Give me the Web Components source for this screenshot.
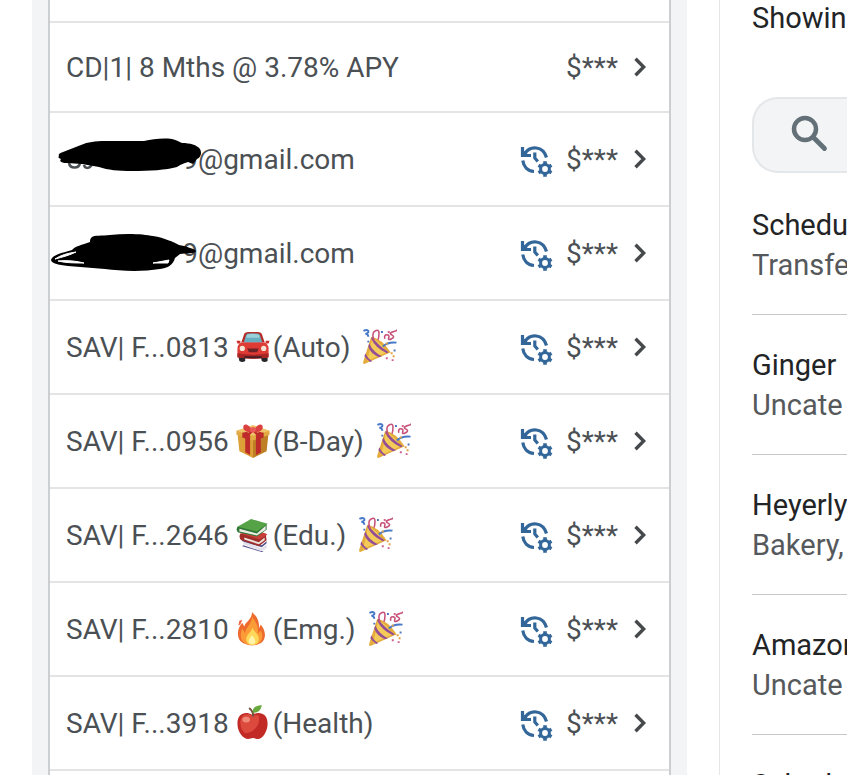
<!DOCTYPE html>
<html lang="en">
<head>
<meta charset="utf-8">
<title>Accounts</title>
<style>
  html, body { margin: 0; height: 100%; background: #fff; overflow: hidden; }
  body { font-family: Roboto, "Liberation Sans", sans-serif; font-size: 28px; color: #4b5054; }
</style>
</head>
<body>
<bank-page>
  <account-list slot="accounts">
    <account-row>CD|1| 8 Mths @ 3.78% APY</account-row>
    <account-row scheduled><redacted-name shape="oval">9</redacted-name>@gmail.com</account-row>
    <account-row scheduled><redacted-name shape="loop">9</redacted-name>@gmail.com</account-row>
    <account-row scheduled>SAV| F...0813<emoji-glyph name="car"></emoji-glyph>(Auto) <emoji-glyph name="party"></emoji-glyph></account-row>
    <account-row scheduled>SAV| F...0956<emoji-glyph name="gift"></emoji-glyph>(B-Day) <emoji-glyph name="party"></emoji-glyph></account-row>
    <account-row scheduled>SAV| F...2646<emoji-glyph name="books"></emoji-glyph>(Edu.) <emoji-glyph name="party"></emoji-glyph></account-row>
    <account-row scheduled>SAV| F...2810<emoji-glyph name="fire"></emoji-glyph>(Emg.) <emoji-glyph name="party"></emoji-glyph></account-row>
    <account-row scheduled>SAV| F...3918<emoji-glyph name="apple"></emoji-glyph>(Health)</account-row>
  </account-list>
  <activity-panel slot="activity">
    <span slot="summary">Showin</span>
    <activity-item>Schedu<span slot="category">Transfe</span></activity-item>
    <activity-item>Ginger<span slot="category">Uncate</span></activity-item>
    <activity-item>Heyerly<span slot="category">Bakery,</span></activity-item>
    <activity-item>Amazon<span slot="category">Uncate</span></activity-item>
    <activity-item>Schedu</activity-item>
  </activity-panel>
</bank-page>

<script>
const define = (name, html, setup) => {
  const template = document.createElement('template');
  template.innerHTML = html;
  customElements.define(name, class extends HTMLElement {
    constructor() {
      super();
      this.attachShadow({ mode: 'open' }).append(template.content.cloneNode(true));
    }
    connectedCallback() { if (setup) setup(this, this.shadowRoot); }
  });
};

define('bank-page', `
<style>
  :host { display: grid; grid-template-columns: minmax(0, 719fr) minmax(0, 128fr); height: 100vh; overflow: hidden; }
  .accounts { display: flex; padding: 0 32px; }
  .activity { border-left: 1px solid #e4e6e8; padding-left: 32px; overflow: hidden; }
</style>
<section class="accounts"><slot name="accounts"></slot></section>
<section class="activity"><slot name="activity"></slot></section>`);

define('account-list', `
<style>
  :host { flex: 1; min-width: 0; display: flex; background: #f2f4f6; padding: 0 16px; }
  .sheet { flex: 1; min-width: 0; background: #fff; border: solid #cccfd1; border-width: 0 2px; }
  .previous { height: 21px; border-bottom: 2px solid #e2e4e5; }
</style>
<div class="sheet"><div class="previous"></div><slot></slot></div>`);

define('account-row', `
<style>
  :host { display: block; border-bottom: 2px solid #e2e4e5; --row: 88px; }
  :host([scheduled]) { --row: 92px; }
  a { display: flex; align-items: center; height: var(--row); padding: 0 23px 0 16px; color: inherit; text-decoration: none; }
  .name { flex: 1; min-width: 0; white-space: nowrap; line-height: 40px; padding-top: 2px; }
  .icon { width: 34px; height: 34px; margin-right: 12px; padding-top: 4px; flex: none; display: none; }
  :host([scheduled]) .icon { display: block; }
  .amount { line-height: 40px; margin-right: 16px; padding-top: 2px; }
  .chevron { width: 12px; height: 20px; flex: none; }
</style>
<a href="#account">
  <span class="name"><slot></slot></span>
  <svg class="icon" viewBox="0 0 34 34" fill="none" stroke="#336699" stroke-width="3.200" aria-hidden="true">
    <path d="M5 9.500C10 1.500 23 1.500 26.500 13.500"/>
    <path d="M2.500 3v8.500H11"/>
    <path d="M2.500 5v6.500H9z" fill="#336699" stroke="none"/>
    <path d="M2.800 16.500C3.500 22.500 7.500 27 14 27.500"/>
    <path d="M14.800 8.500v5.500l3 3.500"/>
    <circle cx="25" cy="25" r="4.400" stroke-width="3"/>
    <path d="M25 17.300v3M25 29.700v3M18.500 21.200l2.600 1.500M28.900 27.300l2.600 1.500M18.500 28.800l2.600-1.500M28.900 22.700l2.600-1.500" stroke-width="3.600"/>
  </svg>
  <span class="amount">$***</span>
  <svg class="chevron" viewBox="0 0 12 20" fill="none" stroke="#46494c" stroke-width="3.400" aria-hidden="true"><path d="M1.500 1.800l8.200 8.200-8.200 8.200"/></svg>
</a>`);

define('redacted-name', `
<style>
  :host { display: inline-flex; position: relative; width: 132px; justify-content: flex-end; line-height: 40px; }
  svg { position: absolute; left: -16px; top: 1px; width: 152px; height: 40px; overflow: visible; display: none; }
  :host([shape=oval]) .oval, :host([shape=loop]) .loop { display: block; }
</style>
<slot></slot>
<svg class="oval" viewBox="0 0 152 40" aria-hidden="true">
  <path d="M19 22c1 6 10 6 11 0M34 24c1 4 6 4 8-1" fill="none" stroke="#4b5054" stroke-width="2.500"/>
  <path d="M9 15C8 13 10 12 13 11L31 4C38 1 45 0 55 0L94 0C103-2 112-3 122-2C127-1 129 1 132 2C140 2 147 4 150 8C152 12 151 16 147 18L143 23L138 21C132 23 130 24 127 26C116 29 100 30 82 30C68 30 58 29 49 26L32 23L17 22C11 22 9 20 11 18C8 17 8 16 9 15z"/>
</svg>
<svg class="loop" viewBox="0 0 152 40" aria-hidden="true">
  <path d="M42 2C44 0 52 1 60 0C76-2 94-1 103 1C115 3 123 7 129 10C135 11 145 14 146 16C146 19 136 18 130 19L125 23C123 30 118 33 110 34C92 37 70 36 55 34L18 31C8 30 1 28 1 25C2 20 12 18 22 15C25 11 32 10 40 7C40 5 40 4 42 2z"/>
  <path d="M5 24C11 20 18 18 26 17C20 20 13 22 5 24zM8 26C18 25 26 26 34 28C25 28 16 28 8 26zM103 28L119 25L118 28z" fill="#fff" stroke="#fff"/>
</svg>`);

const EMOJI = {
  car: ['automobile', `
    <path d="M3 28h7v5q-3 2-6 0zM26 28h7v5q-3 2-6 0z" fill="#27272b"/>
    <path d="M6 14L9 5Q10 3 13 3h10q3 0 4 2l3 9z" fill="#b52c28"/>
    <path d="M8.500 14L11 6q1-1.500 3-1.500h8q2 0 3 1.500l2.500 8z" fill="#69adc0"/><path d="M11 9l1-3q6-2 12 0l1 3z" fill="#9ad0da"/>
    <path d="M1 12h4v3H2zM31 12h4l-1 3h-3z" fill="#cc302c"/>
    <path d="M6 14h24q4 2 4 6v9q-16 3-32 0v-9q0-4 4-6z" fill="#de3b35"/>
    <path d="M2 25q16 3 32 0v4q-16 3-32 0z" fill="#a72523"/>
    <path d="M12 20h12l-2 4h-8z" fill="#6b2327"/><path d="M9 28h18v2H9z" fill="#442026"/>
    <circle cx="7" cy="20" r="2.700" fill="#f6e5d6"/><circle cx="29" cy="20" r="2.700" fill="#f6e5d6"/>`],
  gift: ['wrapped gift', `
    <path d="M2 10l16 6v20L4 29z" fill="#dda038"/><path d="M34 10l-16 6v20l14-7z" fill="#bf7f25"/>
    <path d="M1 8L18 3l17 5v4l-17 6L1 12z" fill="#e2aa42"/><path d="M1 8l17 5 17-5-17-6z" fill="#efc56c"/>
    <path d="M7 10l5-1 3 4v20l-5-3V16l-3-1zM29 10l-5-1-3 4v20l5-3V16l3-1z" fill="#bd2b2a"/>
    <path d="M18 9C14 0 8 0 8 4s4 6 10 5zm0 0c4-9 10-9 10-5s-4 6-10 5z" fill="#db4141"/><path d="M17 8l-8 4 5 1 4-4 4 4 5-1-8-4z" fill="#bd2b2a"/>
    <circle cx="18" cy="7" r="3" fill="#e95b57"/>`],
  books: ['books', `
    <path d="M8 25l19 7 5-4v4l-5 3-19-7z" fill="#e4e1eb"/><path d="M7 23l20 6 5-4v2l-5 4-20-6zM8 29l18 6h3l-2 1L7 30z" fill="#54518d"/>
    <path d="M5 17q-2 4 1 7l18 6 8-6-1-7z" fill="#a12d2a"/><path d="M9 21l15 5 6-5v3l-6 4-15-5z" fill="#eee5df"/><path d="M5 17l20 6 8-5-10-4z" fill="#c93f38"/>
    <path d="M2 10q-2 4 1 6l19 4 10-7V7z" fill="#307535"/><path d="M4 12l18 5 9-8v4l-9 6-18-4z" fill="#e9ede4"/><path d="M2 10L16 2l17 5-11 8z" fill="#55a247"/>`],
  fire: ['fire', `
    <path d="M17 1c0 8-7 10-8 15L7 12c-5 5-5 12-4 15 2 10 25 12 27 0 1-5-1-9-4-13l-2 4C25 9 21 5 17 1z" fill="#ee6b2f"/>
    <path d="M17 6c0 8-7 11-7 17l-3-5c-5 12 3 17 10 17 9 0 13-7 9-15l-3 3C24 14 20 11 17 6z" fill="#fb9c37"/>
    <path d="M17 17c0 5-6 7-6 12 0 8 13 8 13 0 0-5-4-7-7-12z" fill="#ffd85a"/><path d="M17 25c-6 7-3 9 0 9s6-2 0-9z" fill="#fff4a9"/>
    <path d="M4 10l3-1-2 5-2 1z" fill="#ec6440"/>`],
  apple: ['red apple', `
    <path d="M17 10C10 6 2 9 2 19c0 9 6 16 11 16 2 0 3-1 5-1s3 1 5 1c5 0 10-8 10-16 0-10-8-13-16-9z" fill="#c22a26"/>
    <path d="M17 11C11 7 5 11 5 18c0 5 2 9 5 11 9 0 16-9 14-18-3-1-5 0-7 0z" fill="#dc4a3e"/><ellipse cx="11" cy="15" rx="4" ry="3" fill="#f08a78"/>
    <path d="M18 12q1-5-4-9" fill="none" stroke="#72533b" stroke-width="2"/><path d="M18 8C17 2 21 1 27 0c-1 6-4 8-9 8z" fill="#68a83c"/>`],
  party: ['party popper', `
    <path d="M10 8Q21 10 30 24L3 36q-2 0-1-3z" fill="#e5ac3c"/><path d="M11 9q9 5 15 15L6 33z" fill="#f4ca58"/>
    <path d="M8 15q4 9 13 13l-3 1Q9 25 7 18zM4 25q2 5 7 8l-2 1q-4-3-6-6zM11 8q5 8 17 16l-2 1Q14 19 10 10z" fill="#934e96"/>
    <path d="M2 2q4-2 5 0t-3 3q3 0 3 3M22 18q5-5 14-4" fill="none" stroke="#4779c8" stroke-width="2"/>
    <path d="M13 12q-3-8 1-10t4 2-1 7M24 10q-1-4 2-4t2 3 3 1 0-4 4-4 1-2" fill="none" stroke="#c75279" stroke-width="1.600"/>
    <path d="M20 2h2v2h-2zM6 12h2v2H6zM33 21h2v2h-2z" fill="#5176bd"/><path d="M32 27h2v2h-2zM25 14h2v2h-2zM30 24h2v2h-2z" fill="#e3a345"/><path d="M25 29h2v2h-2zM31 31h2v2h-2zM27 2h2v2h-2z" fill="#cf608f"/>`]
};

define('emoji-glyph', `
<style>
  :host { display: inline-block; width: 36px; height: 36px; vertical-align: -8px; margin: 0 2px 0 6px; }
  :host([name=party]) { margin: 0 0 0 4px; }
  svg { display: block; width: 36px; height: 36px; }
</style>
<svg viewBox="0 0 36 37" role="img"></svg>`, (host, root) => {
  const [label, art] = EMOJI[host.getAttribute('name')];
  const svg = root.querySelector('svg');
  svg.setAttribute('aria-label', label);
  svg.innerHTML = art;
});

define('search-box', `
<style>
  :host { display: block; }
  label { display: flex; align-items: center; gap: 16px; box-sizing: border-box; height: 76px; padding: 0 0 2px 37px; background: #f2f4f6; border: 2px solid #e4e7e9; border-right: 0; border-radius: 26px 0 0 26px; overflow: hidden; }
  svg { width: 38px; height: 38px; flex: none; }
  input { flex: 1; min-width: 0; padding: 0; border: 0; outline: 0; background: none; font: inherit; color: inherit; }
</style>
<label>
  <svg viewBox="0 0 38 38" fill="none" stroke="#647078" aria-hidden="true"><circle cx="14" cy="14" r="11" stroke-width="4.500"/><path d="M22.500 22.500L33.500 33.500" stroke-width="4.800" stroke-linecap="round"/></svg>
  <input type="search" aria-label="Search transactions">
</label>`);

define('activity-panel', `
<style>
  :host { display: block; white-space: nowrap; color: #222426; font-size: 29px; }
  .summary { line-height: 36px; padding-bottom: 61px; }
  .items { padding-top: 2px; }
</style>
<div class="summary"><slot name="summary"></slot></div>
<search-box></search-box>
<div class="items"><slot></slot></div>`);

define('activity-item', `
<style>
  :host { display: block; padding: 30px 0 29px; border-bottom: 1px solid #c6c8ca; line-height: 40px; }
  .category { color: #56595c; }
</style>
<div><slot></slot></div>
<div class="category"><slot name="category"></slot></div>`);
</script>
</body>
</html>
